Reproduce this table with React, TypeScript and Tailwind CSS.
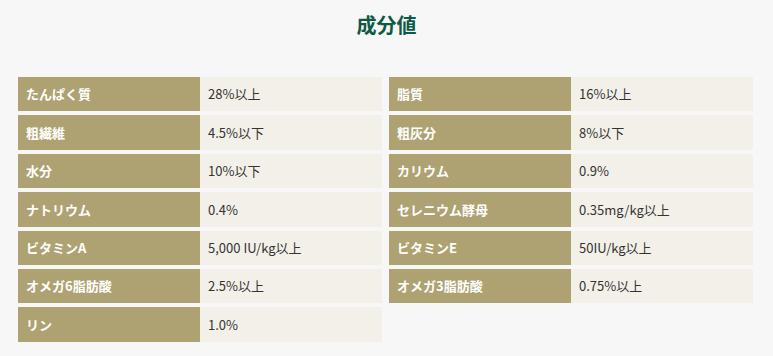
import React from "react";

const left: [string, string][] = [
  ["たんぱく質", "28%以上"],
  ["粗繊維", "4.5%以下"],
  ["水分", "10%以下"],
  ["ナトリウム", "0.4%"],
  ["ビタミンA", "5,000 IU/kg以上"],
  ["オメガ6脂肪酸", "2.5%以上"],
  ["リン", "1.0%"],
];

const right: [string, string][] = [
  ["脂質", "16%以上"],
  ["粗灰分", "8%以下"],
  ["カリウム", "0.9%"],
  ["セレニウム酵母", "0.35mg/kg以上"],
  ["ビタミンE", "50IU/kg以上"],
  ["オメガ3脂肪酸", "0.75%以上"],
];

function Table({ rows }: { rows: [string, string][] }) {
  return (
    <div className="flex flex-col gap-[4px]">
      {rows.map(([k, v]) => (
        <div key={k} className="flex h-[34.4px]">
          <div className="w-[182px] bg-[#aea273] flex items-center pl-[8px] text-white font-bold text-[13px]">
            {k}
          </div>
          <div className="flex-1 bg-[#f3f0e9] flex items-center pl-[8px] text-[#333333] text-[13px]">
            {v}
          </div>
        </div>
      ))}
    </div>
  );
}

export default function App() {
  return (
    <div
      className="w-[773px] h-[356px] bg-[#f7f7f7] overflow-hidden"
      style={{ fontFamily: '"Noto Sans CJK JP", "Noto Sans", sans-serif' }}
    >
      <h2 className="text-center text-[20px] font-bold text-[#0d5a45] pt-[10px] leading-[30px] pl-[0px]">
        成分値
      </h2>
      <div className="grid grid-cols-[364px_364px] gap-x-[7px] pl-[18px] mt-[37px]">
        <Table rows={left} />
        <Table rows={right} />
      </div>
    </div>
  );
}
